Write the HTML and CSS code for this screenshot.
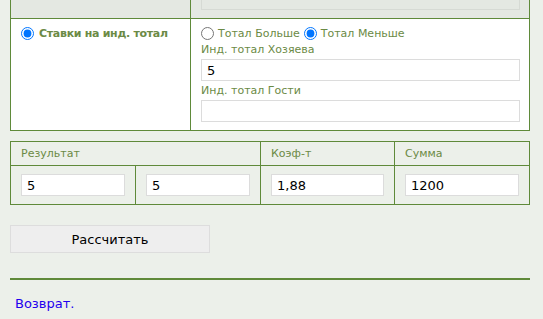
FILE: index.html
```html
<!DOCTYPE html>
<html lang="ru">
<head>
  <meta charset="UTF-8">
  <title>Калькулятор ставок</title>
  <link rel="stylesheet" href="styles.css">
</head>
<body>
  <form class="calc">
    <table class="bets">
      <colgroup>
        <col class="col-kind">
        <col>
      </colgroup>
      <tr class="muted">
        <td></td>
        <td><input type="text" class="field field-muted" disabled></td>
      </tr>
      <tr>
        <td>
          <label class="bet-kind"><input type="radio" name="kind" checked> Ставки на инд. тотал</label>
        </td>
        <td>
          <div class="options">
            <label><input type="radio" name="side"> Тотал Больше</label>
            <label><input type="radio" name="side" checked> Тотал Меньше</label>
          </div>
          <div class="caption">Инд. тотал Хозяева</div>
          <input type="text" class="field" value="5">
          <div class="caption">Инд. тотал Гости</div>
          <input type="text" class="field" value="">
        </td>
      </tr>
    </table>

    <table class="result">
      <colgroup>
        <col class="c1">
        <col class="c2">
        <col class="c3">
        <col class="c4">
      </colgroup>
      <tr class="head">
        <td colspan="2">Результат</td>
        <td>Коэф-т</td>
        <td>Сумма</td>
      </tr>
      <tr>
        <td><input type="text" class="field" value="5"></td>
        <td><input type="text" class="field" value="5"></td>
        <td><input type="text" class="field" value="1,88"></td>
        <td><input type="text" class="field" value="1200"></td>
      </tr>
    </table>

    <button type="button" class="calc-btn">Рассчитать</button>
  </form>

  <hr class="line">
  <a href="#" class="back">Возврат.</a>
</body>
</html>
```

FILE: styles.css
```css
body {
  margin: 0;
  padding: 0 14px 20px 10px;
  background-color: #ecf0ea;
  font-family: "DejaVu Sans", Verdana, sans-serif;
  font-size: 11px;
  color: #6b8a45;
  overflow: hidden;
}

.calc {
  width: 520px;
}

table {
  width: 520px;
  border-collapse: collapse;
  table-layout: fixed;
}

td {
  border: 1px solid #5f8a3a;
  vertical-align: top;
}

.bets {
  margin-top: -21px;
  background-color: #ffffff;
}

.bets td {
  padding: 8px 9px 8px 10px;
}

.col-kind {
  width: 180px;
}

.muted td {
  background-color: #e4e8e2;
  padding: 8px 9px 8px 10px;
}

.bet-kind {
  font-weight: bold;
  letter-spacing: -0.3px;
  display: flex;
  align-items: center;
  gap: 5px;
}

input[type="radio"] {
  margin: 0;
  width: 13px;
  height: 13px;
}

.options {
  display: flex;
  gap: 4px;
  align-items: center;
  height: 13px;
}

.options label {
  display: flex;
  align-items: center;
  gap: 4px;
}

.caption {
  margin: 3px 0;
  height: 13px;
  line-height: 13px;
}

.field {
  display: block;
  box-sizing: border-box;
  width: 100%;
  height: 22px;
  padding: 0 5px;
  border: 1px solid #dcdcdc;
  background-color: #ffffff;
  font-family: "DejaVu Sans", Verdana, sans-serif;
  font-size: 13px;
  color: #000000;
}

.field-muted {
  background-color: #e4e8e2;
  border-color: #d6dad4;
}

.result {
  margin-top: 10px;
}

.result .c1, .result .c2 {
  width: 125px;
}

.result .c3 {
  width: 134px;
}

.head td {
  height: 23px;
  padding: 0 10px;
  vertical-align: middle;
}

.result tr:last-child td {
  padding: 8px 10px 8px;
}

.calc-btn {
  display: block;
  margin-top: 20px;
  width: 200px;
  height: 28px;
  background-color: #eeeeee;
  border: 1px solid #dddddd;
  font-family: "DejaVu Sans", Verdana, sans-serif;
  font-size: 13px;
  color: #000000;
}

.line {
  width: 520px;
  margin: 25px 0 0 0;
  border: none;
  height: 2px;
  background-color: #5f8a3a;
}

.back {
  display: inline-block;
  margin: 16px 0 0 5px;
  font-size: 13px;
  color: #2200ee;
  text-decoration: none;
}
```
